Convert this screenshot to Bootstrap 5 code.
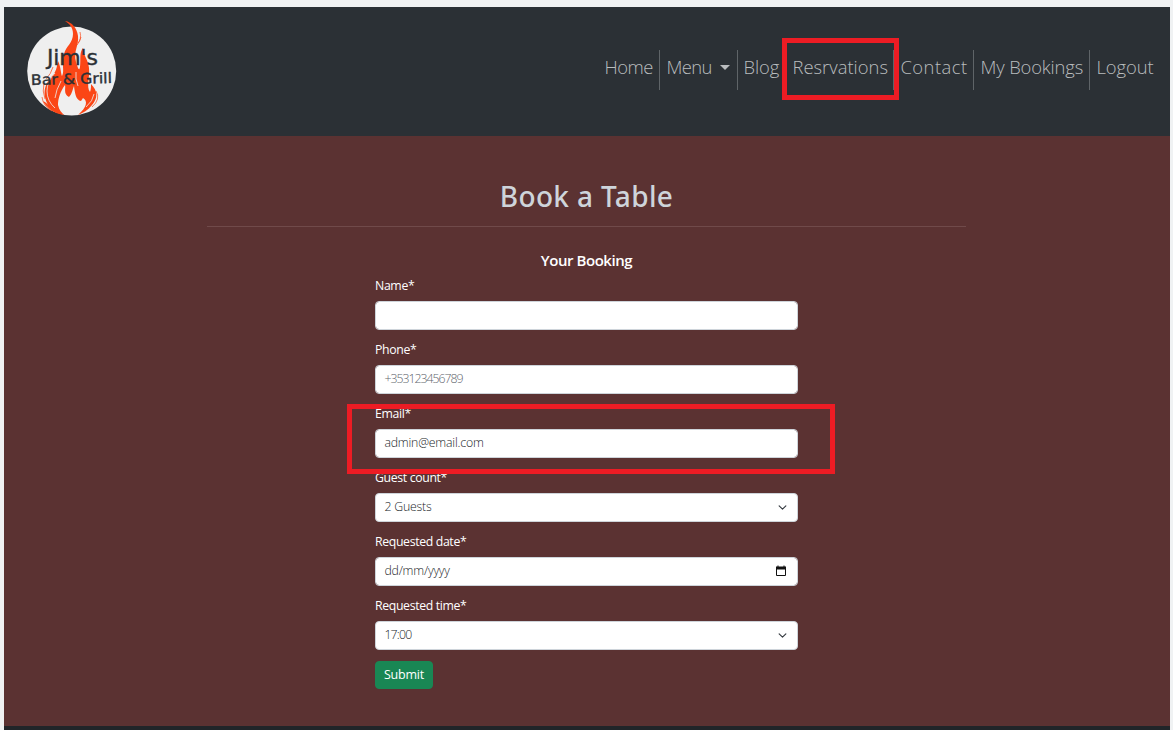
<!DOCTYPE html>
<html lang="en">
<head>
<meta charset="utf-8">
<meta name="viewport" content="width=device-width, initial-scale=1">
<title>Jim's Bar &amp; Grill - Book a Table</title>
<link href="https://cdn.jsdelivr.net/npm/bootstrap@5.3.0/dist/css/bootstrap.min.css" rel="stylesheet">
<style>
body{background:#f0f2f3;font-family:"Open Sans","Noto Sans",sans-serif;height:730px;overflow:hidden}
.site{margin:7px 3px 0 4px;height:723px;background:#5b3232}
.site-nav{height:129px;background:#2b3035;padding:0 10px 0 23px}
.site-nav .navbar-brand{margin-top:-8px!important}
.main-links{margin-top:-4px;height:40px}
.main-links .nav-item{border-right:1px solid #5f6468;height:40px;padding-left:6.5px}
.main-links .nav-item:last-child{border:0}
.main-links .nav-link{color:#b9bcbe;font-size:18.4px;font-weight:300;line-height:34px;padding:0;white-space:nowrap}
.main-links .dropdown-toggle::after{margin-left:8px;border-width:5px 5px 0;vertical-align:4px}
.w-home{width:61px}.w-menu{width:78px}.w-blog{width:49px}.w-res{width:107px}.w-contact{width:80px}.w-mine{width:116px}.w-out{width:70px}
.w-home,.w-res,.w-blog{text-indent:-1px}
.w-home .nav-link{letter-spacing:-.5px}.w-menu .nav-link{letter-spacing:-.6px}.w-blog .nav-link{letter-spacing:-.1px}
.w-res .nav-link{letter-spacing:0}.w-contact .nav-link{letter-spacing:.45px}.w-mine .nav-link{letter-spacing:-.15px}.w-out .nav-link{letter-spacing:-.1px}
.w-blog{border-color:transparent!important}
.content-col{width:759px;padding-top:41px;margin-left:203px}
.page-title{font-family:"Noto Sans",sans-serif;font-size:28px;line-height:38px;font-weight:500;letter-spacing:.35px;color:#ced4da}
.rule{height:1px;background:#704a4a;margin-top:11px}
.sub-title{font-size:15px;line-height:20px;font-weight:600;letter-spacing:-.45px;margin:23px 0 6px;color:#fff}
.booking{width:423px}
.booking .form-label{display:block;font-size:12.3px;line-height:20px;color:#fff;margin:0 0 4.5px;letter-spacing:-.36px}
.booking .form-control,.booking .form-select{height:29px;min-height:29px;padding:0 8.4px 1px;margin-bottom:10.5px;font-size:12.3px;line-height:25px;font-weight:300;color:#212529;border:1px solid #ced4da;border-radius:4px;letter-spacing:-.2px}
.booking .form-select{background-position:right 9px center;background-size:11px 9px}
.booking .form-control::placeholder{color:#5f666d;letter-spacing:-1px}
.booking #time{letter-spacing:-.8px}
.date-icon{margin-right:2px}
.btn-send{width:58px;height:28px;padding:0;font-size:12.5px;line-height:24px;letter-spacing:-.2px;border-radius:4px;margin-top:1px}
.foot{height:4px;background:#212529}
.mark-box{position:absolute;border:5px solid #ed1c24;pointer-events:none}
.mark-nav{left:782px;top:38px;width:117px;height:62px}
.mark-email{left:347px;top:404px;width:488px;height:70px}
</style>
</head>
<body class="position-relative">
<div class="site d-flex flex-column">
<nav class="site-nav navbar navbar-expand d-flex justify-content-between align-items-center">
<a href="#" class="navbar-brand p-0 m-0" aria-label="Jim's Bar and Grill">
<svg width="90" height="98" viewBox="27 19 90 98" class="d-block">
<circle cx="71.7" cy="71" r="44.5" fill="#efefef"/>
<path fill="#fb4616" d="M65 21C72 22 77 28 78 36C79 46 73 51 76 62C78 68 79 72 80 67C81 59 79 53 83 48C83 55 88 59 89 68C90 78 86 86 90 92C91 89 91 87 91 84C98 91 98 98 92 105C88 110 83 113 78 115C87 107 88 101 83 98L81 101C76 100 75 94 74 86C72 91 72 94 69 97C63 94 66 88 65 85C60 92 58 99 58 105C59 110 62 113 64 115C54 114 46 107 43 101C46 102 47 104 48 105C41 91 46 83 53 75C57 70 57 65 58 61C61 67 61 75 62 76C65 71 61 63 64 54C66 46 73 43 73 34C73 28 70 24 65 21Z"/>
<path fill="none" stroke="#fb4616" stroke-width=".7" d="M80 32Q82 39 77 45M81 37Q80 41 78 43M53 67Q51 74 46 79M44 83Q42 91 45 99M42 97Q43 106 52 111M96 91Q101 99 92 107"/>
<path fill="none" stroke="#efefef" stroke-width=".8" d="M55 73Q47 81 47 91Q47 101 55 108M76 72Q75 79 78 86M94 94Q93 101 86 107M61 81Q56 90 55 98"/>
<g fill="#2b3035" font-family="DejaVu Sans,sans-serif">
<text x="47" y="65" font-size="22" textLength="51" lengthAdjust="spacing" stroke="#2b3035" stroke-width=".4">Jim's</text>
<text x="31" y="84" font-size="14.5" textLength="81" lengthAdjust="spacingAndGlyphs" stroke="#2b3035" stroke-width=".4" transform="rotate(-1.5 71 80)">Bar &amp; Grill</text>
</g>
</svg>
</a>
<ul class="navbar-nav main-links">
<li class="nav-item w-home"><a class="nav-link px-0" href="#">Home</a></li>
<li class="nav-item w-menu"><a class="nav-link px-0 dropdown-toggle" href="#">Menu</a></li>
<li class="nav-item w-blog"><a class="nav-link px-0" href="#">Blog</a></li>
<li class="nav-item w-res"><a class="nav-link px-0" href="#">Resrvations</a></li>
<li class="nav-item w-contact"><a class="nav-link px-0" href="#">Contact</a></li>
<li class="nav-item w-mine"><a class="nav-link px-0" href="#">My Bookings</a></li>
<li class="nav-item w-out"><a class="nav-link px-0" href="#">Logout</a></li>
</ul>
</nav>
<main class="flex-grow-1">
<div class="content-col">
<h1 class="page-title text-center m-0">Book a Table</h1>
<div class="rule"></div>
<h2 class="sub-title text-center">Your Booking</h2>
<form class="booking mx-auto">
<label class="form-label" for="name">Name*</label>
<input class="form-control" id="name" type="text">
<label class="form-label" for="phone">Phone*</label>
<input class="form-control" id="phone" type="text" placeholder="+353123456789">
<label class="form-label" for="email">Email*</label>
<input class="form-control" id="email" type="text" value="admin@email.com">
<label class="form-label" for="guests">Guest count*</label>
<select class="form-select" id="guests"><option>2 Guests</option></select>
<label class="form-label">Requested date*</label>
<div class="form-control d-flex justify-content-between align-items-center"><span>dd/mm/yyyy</span>
<svg width="12" height="12" viewBox="0 0 12 12" class="date-icon"><path d="M1.5 2.5h9v8h-9z" fill="none" stroke="#111"/><path d="M1 1.5h10v3H1zM2.5.5h1v2h-1zM8.5.5h1v2h-1z" fill="#111"/></svg></div>
<label class="form-label" for="time">Requested time*</label>
<select class="form-select" id="time"><option>17:00</option></select>
<button type="button" class="btn btn-success btn-send">Submit</button>
</form>
</div>
</main>
<footer class="foot"></footer>
</div>
<div class="mark-box mark-nav"></div>
<div class="mark-box mark-email"></div>
<script src="https://cdn.jsdelivr.net/npm/bootstrap@5.3.0/dist/js/bootstrap.bundle.min.js"></script>
</body>
</html>
